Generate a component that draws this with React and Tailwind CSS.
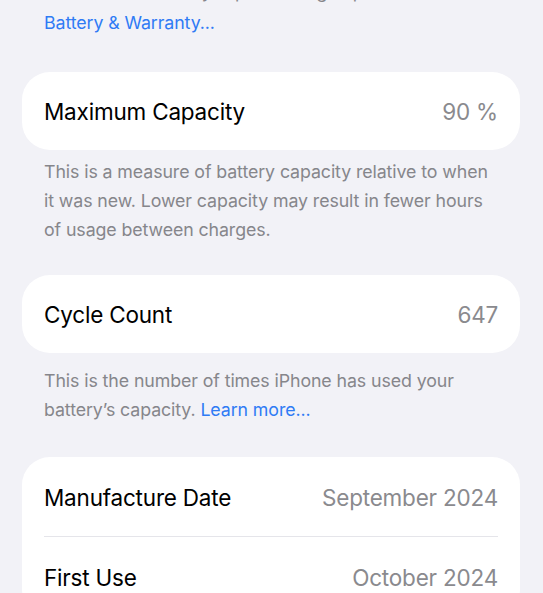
export default function App() {
  const font = { fontFamily: 'Inter, "Noto Sans", sans-serif' };
  return (
    <div
      className="h-[593px] w-[543px] overflow-hidden bg-[#f2f2f7] pl-[22px] pr-[23px]"
      style={font}
    >
      <div className="px-[22px] text-[17.8px] leading-[28.5px] tracking-[-0.1px] text-[#86868b]">
        <div className="mt-[-22.5px] whitespace-nowrap">All about the battery is performing at peak and</div>
        <div className="mt-[3px] text-[#2f7bf5]">Battery &amp; Warranty...</div>
      </div>

      <div className="mt-[34px] flex h-[78px] items-center justify-between rounded-[28px] bg-white px-[22px] pt-[2px] text-[22.5px] leading-[28px] tracking-[-0.2px]">
        <span className="text-black">Maximum Capacity</span>
        <span className="text-[#8a8a8e]">90 %</span>
      </div>

      <div className="mt-[7px] px-[22px] text-[17.8px] leading-[29px] tracking-[-0.1px] text-[#86868b]">
        This is a measure of battery capacity relative to when it was new. Lower capacity may result in fewer hours of usage between charges.
      </div>

      <div className="mt-[31px] flex h-[78px] items-center justify-between rounded-[28px] bg-white px-[22px] pt-[2px] text-[22.5px] leading-[28px] tracking-[-0.2px]">
        <span className="text-black">Cycle Count</span>
        <span className="text-[#8a8a8e]">647</span>
      </div>

      <div className="mt-[13px] px-[22px] text-[17.8px] leading-[29px] tracking-[-0.1px] text-[#86868b]">
        This is the number of times iPhone has used your battery’s capacity. <span className="text-[#2f7bf5]">Learn more...</span>
      </div>

      <div className="mt-[33px] rounded-[28px] bg-white px-[22px] text-[22.5px] leading-[28px] tracking-[-0.2px]">
        <div className="flex h-[80px] items-center justify-between border-b border-[#e5e5ea] pt-[3px]">
          <span className="text-black">Manufacture Date</span>
          <span className="text-[#8a8a8e]">September 2024</span>
        </div>
        <div className="flex h-[80px] items-center justify-between pt-[3px]">
          <span className="text-black">First Use</span>
          <span className="text-[#8a8a8e]">October 2024</span>
        </div>
      </div>
    </div>
  );
}
